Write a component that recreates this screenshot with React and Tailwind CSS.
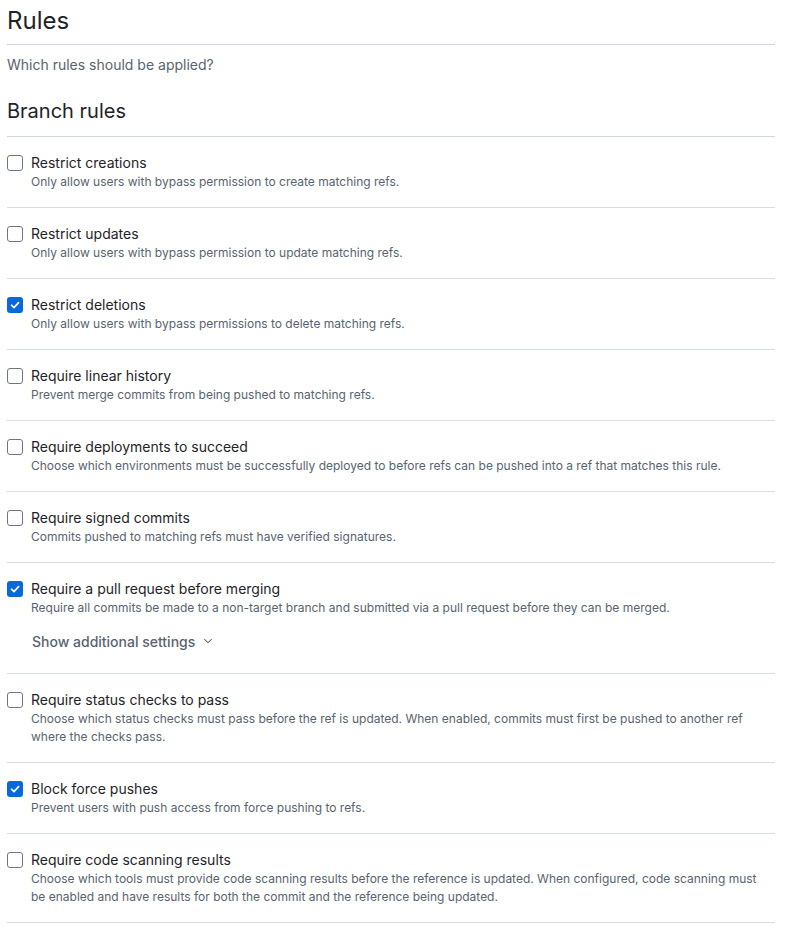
import { ChevronDown } from "lucide-react";

const rules = [
  {
    title: "Restrict creations",
    desc: "Only allow users with bypass permission to create matching refs.",
  },
  {
    title: "Restrict updates",
    desc: "Only allow users with bypass permission to update matching refs.",
  },
  {
    title: "Restrict deletions",
    desc: "Only allow users with bypass permissions to delete matching refs.",
    checked: true,
  },
  {
    title: "Require linear history",
    desc: "Prevent merge commits from being pushed to matching refs.",
  },
  {
    title: "Require deployments to succeed",
    desc: "Choose which environments must be successfully deployed to before refs can be pushed into a ref that matches this rule.",
  },
  {
    title: "Require signed commits",
    desc: "Commits pushed to matching refs must have verified signatures.",
  },
  {
    title: "Require a pull request before merging",
    desc: "Require all commits be made to a non-target branch and submitted via a pull request before they can be merged.",
    checked: true,
    more: true,
  },
  {
    title: "Require status checks to pass",
    desc: "Choose which status checks must pass before the ref is updated. When enabled, commits must first be pushed to another ref where the checks pass.",
  },
  {
    title: "Block force pushes",
    desc: "Prevent users with push access from force pushing to refs.",
    checked: true,
  },
  {
    title: "Require code scanning results",
    desc: "Choose which tools must provide code scanning results before the reference is updated. When configured, code scanning must be enabled and have results for both the commit and the reference being updated.",
  },
];

function Checkbox({ checked }) {
  if (checked) {
    return (
      <span className="mt-[2px] flex h-4 w-4 flex-shrink-0 items-center justify-center rounded-[3px] bg-[#0969da]">
        <svg width="12" height="12" viewBox="0 0 12 12" fill="none">
          <path d="M2.5 6.2 5 8.6 9.6 3.6" stroke="white" strokeWidth="1.6" strokeLinecap="round" strokeLinejoin="round" />
        </svg>
      </span>
    );
  }
  return (
    <span className="mt-[2px] h-4 w-4 flex-shrink-0 rounded-[3px] border border-[#6e7781] bg-white" />
  );
}

function RuleRow({ rule }) {
  return (
    <div className="border-b border-[#d8dee4] pt-4 pb-4">
      <label className="flex gap-2">
        <Checkbox checked={rule.checked} />
        <div className="min-w-0 flex-1">
          <p className="text-[14px] leading-5 text-[#1f2328]">{rule.title}</p>
          <p className="max-w-[735px] text-[12px] leading-[18px] text-[#59636e]">{rule.desc}</p>
        </div>
      </label>
      {rule.more && (
        <button className="mt-2 ml-[25px] flex h-8 items-center gap-[6px] text-[14px] font-medium text-[#59636e]">
          Show additional settings
          <ChevronDown size={14} strokeWidth={1.75} />
        </button>
      )}
    </div>
  );
}

export default function App() {
  return (
    <div
      className="min-h-screen bg-white px-[7px] pr-[33px]"
      style={{ fontFamily: "Inter, 'Noto Sans', sans-serif" }}
    >
      <div className="border-b border-[#d0d7de] pt-[4px] pb-[6px]">
        <h2 className="text-[24px] leading-[34px] text-[#1f2328]">Rules</h2>
      </div>
      <p className="pt-[10px] text-[14px] leading-5 text-[#59636e]">Which rules should be applied?</p>
      <div className="mt-[21px] border-b border-[#d0d7de] pb-[10px]">
        <h3 className="text-[20px] leading-[30px] text-[#1f2328]">Branch rules</h3>
      </div>
      {rules.map((r) => (
        <RuleRow key={r.title} rule={r} />
      ))}
    </div>
  );
}
